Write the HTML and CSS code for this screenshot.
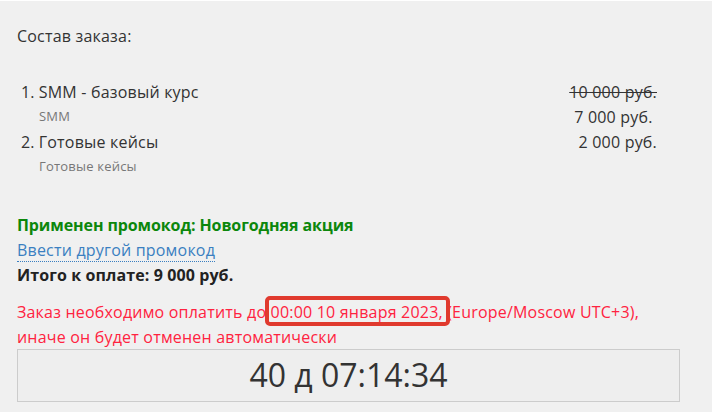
FILE: index.html
```html
<!DOCTYPE html>
<html lang="ru">
<head>
<meta charset="utf-8">
<link rel="stylesheet" href="styles.css">
</head>
<body>
<div class="page">
  <div class="title">Состав заказа:</div>
  <ol class="items">
    <li class="item">
      <div class="item-main">
        <div class="item-name"><span class="num">1.</span>SMM - базовый курс</div>
        <div class="item-sub">SMM</div>
      </div>
      <div class="item-price">
        <div class="old">10 000 руб.</div>
        <div class="new">7 000 руб.&nbsp;</div>
      </div>
    </li>
    <li class="item">
      <div class="item-main">
        <div class="item-name"><span class="num">2.</span>Готовые кейсы</div>
        <div class="item-sub">Готовые кейсы</div>
      </div>
      <div class="item-price">
        <div class="new">2 000 руб.</div>
      </div>
    </li>
  </ol>
  <div class="promo">Применен промокод: Новогодняя акция</div>
  <div><a class="promo-link">Ввести другой промокод</a></div>
  <div class="total">Итого к оплате: 9 000 руб.</div>
  <div class="warn">Заказ необходимо оплатить до <span class="mark">00:00 10 января 2023,</span> (Europe/Moscow UTC+3),<br>иначе он будет отменен автоматически</div>
  <div class="timer">40 д 07:14:34</div>
</div>
</body>
</html>
```
FILE: styles.css
```css
html, body {
  margin: 0;
  padding: 0;
}
body {
  background: #fff;
  font-family: "Open Sans", "Liberation Sans", sans-serif;
  color: #333;
  font-size: 16px;
  letter-spacing: 0.2px;
}
.page {
  background: #f0f0f0;
  width: 712px;
  height: 411px;
  margin-top: 1px;
  padding: 23px 0 0 17px;
  box-sizing: border-box;
  overflow: hidden;
  line-height: 25px;
}
.title {
  margin-bottom: 31px;
}
.items {
  list-style: none;
  margin: 0;
  padding: 0 0 0 4px;
  width: 636px;
}
.item {
  display: flex;
  justify-content: space-between;
}
.item-name .num {
  display: inline-block;
  margin-right: 4px;
}
.item-sub {
  font-size: 13px;
  letter-spacing: 0.2px;
  color: #777;
  padding-left: 18px;
  line-height: 23px;
}
.item-price {
  text-align: right;
}
.old {
  text-decoration: line-through;
  color: #333;
}
.promo {
  margin-top: 35px;
  color: #0c870c;
  font-weight: 700;
  letter-spacing: -0.1px;
}
.promo-link {
  color: #3a7fc1;
  border-bottom: 1px dotted #3a7fc1;
  text-decoration: none;
}
.total {
  font-weight: 700;
  color: #222;
  letter-spacing: 0.1px;
}
.warn {
  margin-top: 12px;
  color: #ff2340;
}
.mark {
  position: relative;
}
.mark::after {
  content: "";
  position: absolute;
  left: -6px;
  right: -7px;
  top: -5px;
  bottom: -3px;
  border: 4px solid #e03a2e;
  border-radius: 5px;
}
.timer {
  width: 663px;
  height: 53px;
  box-sizing: border-box;
  border: 1px solid #ccc;
  background: #eee;
  text-align: center;
  font-size: 32px;
  line-height: 50px;
  color: #333;
  letter-spacing: 0;
  margin-top: -1px;
}
```
